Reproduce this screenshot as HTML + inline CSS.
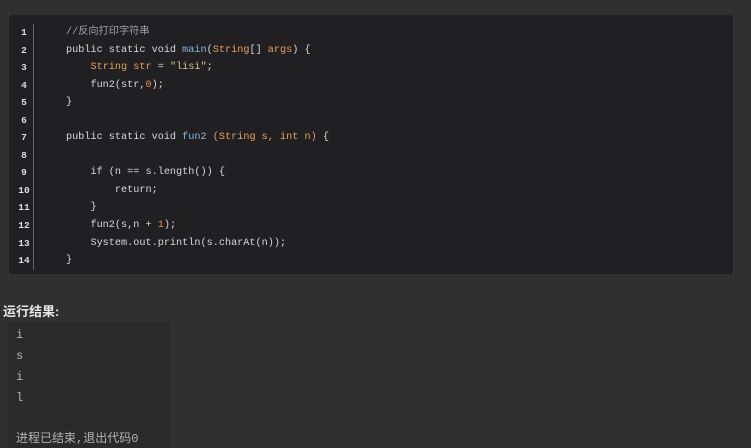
<!DOCTYPE html>
<html><head><meta charset="utf-8"><style>
body{margin:0;width:751px;height:446px;background:#303031;overflow:hidden;font-family:"Liberation Mono","Noto Sans CJK SC",monospace;}
.code{position:absolute;left:9px;top:15px;width:724px;height:259px;background:#202022;border-radius:3px;}
.nums{position:absolute;left:0;top:9px;width:25px;border-right:1px solid #666;color:#ddd;font-size:9.5px;line-height:17.55px;padding-left:6px;box-sizing:border-box;font-weight:bold;text-align:center}
.nums div{height:17.55px;line-height:17.55px}
.src{position:absolute;left:57px;top:9px;font-size:10.2px;line-height:17.55px;color:#d8d8d8;white-space:pre;}
.t{color:#e8a060}.f{color:#8ab4e0}.s{color:#d4c68a}.n{color:#f08a5d}.c{color:#a0a0a0}
.h{position:absolute;left:3px;top:301px;color:#e6e6e6;font-size:13px;font-weight:bold;font-family:"Liberation Sans","Noto Sans CJK SC",sans-serif}
.out{position:absolute;left:8px;top:322px;width:162px;height:126px;background:#2a2a2b;}
.out div{position:absolute;left:8px;color:#b4b4b4;font-size:12px}
</style></head><body>
<div class="code">
<div class="nums"><div>1</div><div>2</div><div>3</div><div>4</div><div>5</div><div>6</div><div>7</div><div>8</div><div>9</div><div>10</div><div>11</div><div>12</div><div>13</div><div>14</div></div>
<div class="src"><span class="c">//反向打印字符串</span>
public static void <span class="f">main</span>(<span class="t">String</span>[] <span class="t">args</span>) {
    <span class="t">String str</span> = <span class="s">"lisi"</span>;
    fun2(str,<span class="n">0</span>);
}

public static void <span class="f">fun2</span> <span class="t">(String s, int n)</span> {

    if (n == s.length()) {
        return;
    }
    fun2(s,n + <span class="n">1</span>);
    System.out.println(s.charAt(n));
}</div>
</div>
<div class="h">运行结果:</div>
<div class="out">
<div style="top:6px">i</div><div style="top:27px">s</div><div style="top:48px">i</div><div style="top:69px">l</div>
<div style="top:107px">进程已结束,退出代码0</div>
</div>
</body></html>
